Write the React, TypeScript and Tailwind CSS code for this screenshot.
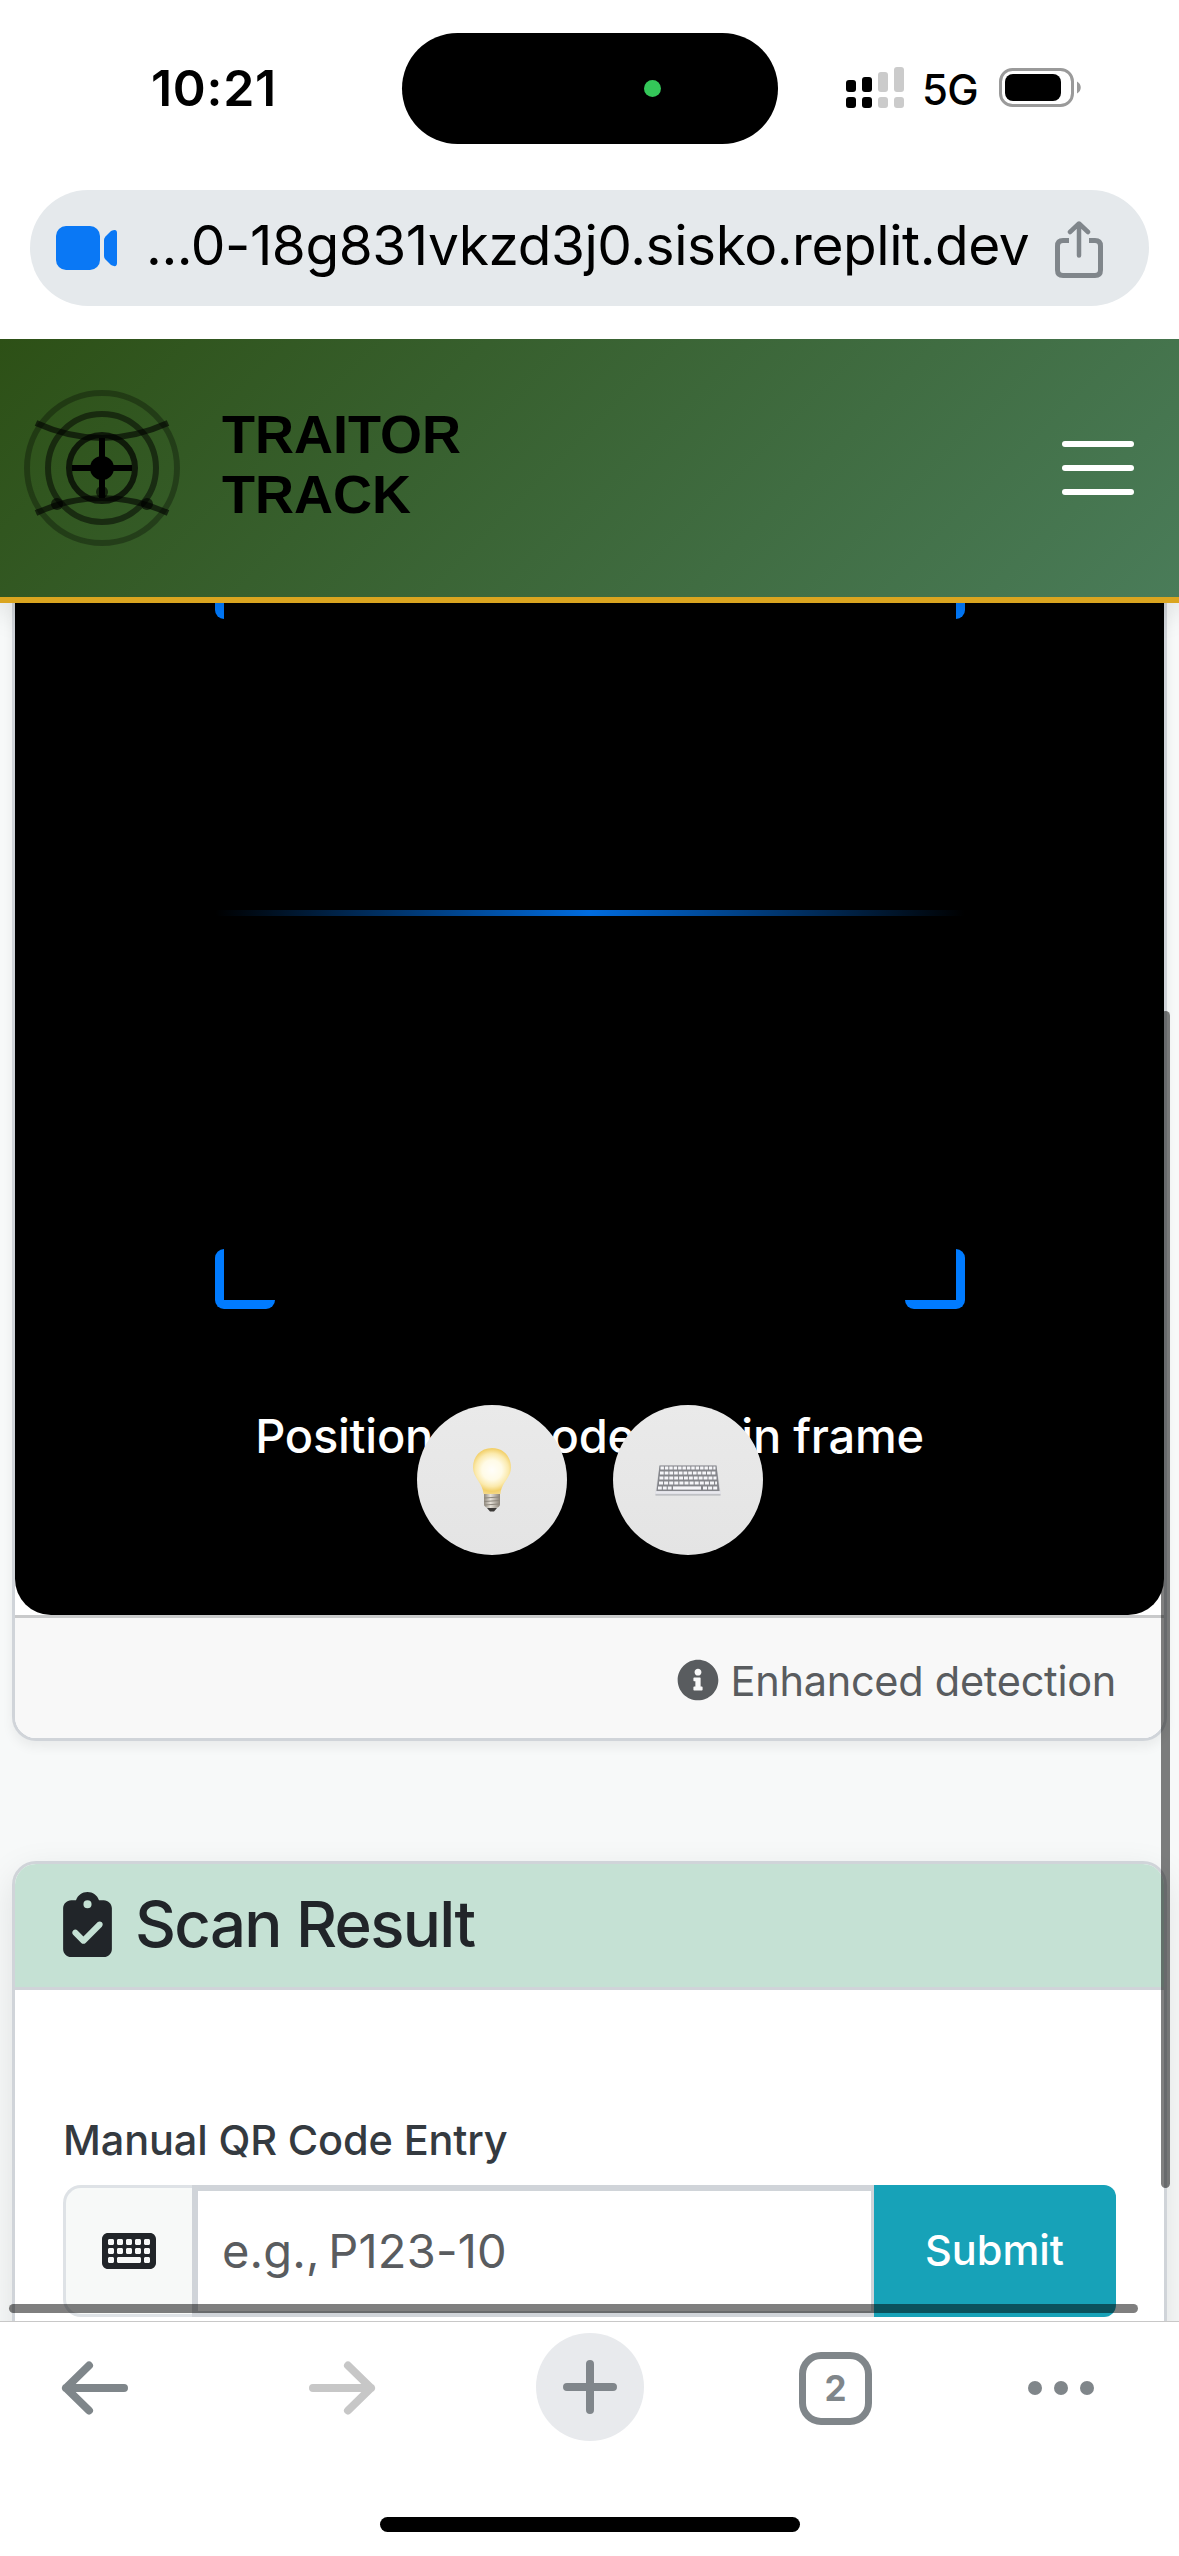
import React from 'react';
import { FaInfoCircle } from 'react-icons/fa';
import { FaClipboardCheck, FaKeyboard } from 'react-icons/fa6';

function StatusBar() {
  return (
    <div className="relative z-20 h-[180px] shrink-0 bg-white">
      <div className="absolute left-[151px] top-[58px] text-[50px] leading-[60px] font-semibold tracking-[0.7px] whitespace-nowrap">10:21</div>
      <div className="absolute left-[402px] top-[33px] w-[376px] h-[111px] rounded-full bg-black">
        <div className="absolute left-[242px] top-[47px] size-[17px] rounded-full bg-[#34c759]" />
      </div>
      <svg className="absolute left-[846px] top-[67px]" width="58" height="41" viewBox="0 0 58 41">
        <rect x="0" y="13" width="10" height="12" rx="3" />
        <rect x="16" y="10" width="10" height="15" rx="3" />
        <rect x="0" y="30" width="10" height="11" rx="3" />
        <rect x="16" y="30" width="10" height="11" rx="3" />
        <g fill="#cbcbcb">
          <rect x="32" y="5" width="10" height="20" rx="3" />
          <rect x="48" y="0" width="10" height="25" rx="3" />
          <rect x="32" y="30" width="10" height="11" rx="3" />
          <rect x="48" y="30" width="10" height="11" rx="3" />
        </g>
      </svg>
      <div className="absolute left-[922px] top-[65px] text-[42px] leading-[50px] font-medium tracking-[-0.7px]">5G</div>
      <svg className="absolute left-[999px] top-[68px]" width="84" height="39" viewBox="0 0 84 39">
        <rect x="1.5" y="1.5" width="72" height="36" rx="12" fill="none" stroke="#9a9a9a" strokeWidth="3" />
        <rect x="6" y="6" width="56" height="27" rx="8" />
        <path d="M78 13.5c5 2.500 5 9.500 0 12z" fill="#9a9a9a" />
      </svg>
    </div>
  );
}

function AddressBar() {
  return (
    <div className="relative z-20 h-[159px] shrink-0 bg-white px-[30px] pt-[10px]">
      <div className="flex h-[116px] items-center rounded-full bg-[#e5e9ec] pl-[26px] pr-[46px]">
        <svg className="shrink-0" width="61" height="44" viewBox="0 0 61 44" fill="#0a78f5">
          <rect width="44" height="44" rx="10" />
          <path d="M48 14q0-2 1.500-3.500L55 5q6-3 6 2v30q0 5-6 2l-5.500-5.500Q48 32 48 30z" />
        </svg>
        <div className="ml-[29px] mt-[-6px] w-[910px] text-[55px] leading-[66px] tracking-[-0.440px] whitespace-nowrap">...0-18g831vkzd3j0.sisko.replit.dev</div>
        <svg className="mt-[2px] shrink-0" width="48" height="57" viewBox="0 0 48 57" fill="none" stroke="#80868b" strokeWidth="5" strokeLinecap="round" strokeLinejoin="round">
          <path d="M14 19.500H8q-5.500 0-5.500 5.500v24q0 5.500 5.500 5.500h32q5.500 0 5.500-5.500V25q0-5.500-5.500-5.500h-6" strokeLinecap="butt" />
          <path d="M24 34.500V3M15 11l9-8.500 9 8.500" strokeWidth="4.500" />
        </svg>
      </div>
    </div>
  );
}

function Header() {
  return (
    <header className="relative z-10 flex h-[264px] shrink-0 items-center border-b-[6px] border-[#daa520] bg-[linear-gradient(135deg,#2d5016,#4a7c59)] pl-[12px] pr-[45px] shadow-[0_6px_30px_rgba(0,0,0,0.15)]">
      <svg width="180" height="180" viewBox="-30 -30 60 60" fill="none" stroke="#000" strokeWidth="2">
        <circle r="25" opacity=".3" />
        <circle r="18" opacity=".5" />
        <circle r="11" opacity=".7" />
        <circle r="4" fill="#000" stroke="none" />
        <path d="M-10 0H10M0-10V10" />
        <path d="M-22-15Q0-5 22-15M-22 15Q0 5 22 15" opacity=".6" />
        <g fill="#000" stroke="none" opacity=".6">
          <circle cx="-15" cy="12" r="2" />
          <circle cx="15" cy="12" r="2" />
          <circle cy="8" r="2" />
        </g>
      </svg>
      <div className="ml-[30px] mt-[-8px] font-['Liberation_Sans'] text-[54px] leading-[60px] font-bold">TRAITOR<br />TRACK</div>
      <div className="ml-auto flex flex-col gap-[18px]">
        <div className="h-[6px] w-[72px] rounded-full bg-white" />
        <div className="h-[6px] w-[72px] rounded-full bg-white" />
        <div className="h-[6px] w-[72px] rounded-full bg-white" />
      </div>
    </header>
  );
}

function Bulb() {
  return (
    <svg width="40" height="66" viewBox="0 0 40 66">
      <defs>
        <radialGradient id="glass" gradientUnits="userSpaceOnUse" cx="20" cy="23" r="25">
          <stop offset="0" stopColor="#fffefa" />
          <stop offset=".4" stopColor="#fffbe6" />
          <stop offset=".66" stopColor="#fbeaae" />
          <stop offset=".85" stopColor="#f2d06a" />
          <stop offset="1" stopColor="#f5da8c" />
        </radialGradient>
        <linearGradient id="screw">
          <stop offset="0" stopColor="#8f887c" />
          <stop offset=".4" stopColor="#e6e1d8" />
          <stop offset="1" stopColor="#8b8377" />
        </linearGradient>
      </defs>
      <path d="M20 1C8 1 1 10 1 20.500 1 31 11 36 11.500 47h17C29 36 39 31 39 20.500 39 10 32 1 20 1z" fill="url(#glass)" />
      <path d="M12 47h16v10q0 3-4 4h-8q-4-1-4-4z" fill="url(#screw)" />
      <path d="M12 51l16-1M12 54.500l16-1M12.500 58l15-1" stroke="#8d877d" strokeWidth="1.100" />
      <path d="M15 61h10l-3 3.500h-4z" fill="#3c3a38" />
    </svg>
  );
}

const keyRows = [
  { y: 3, x: 5.5, w: 55, d: '3.4 1' },
  { y: 8, x: 5, w: 56, d: '3.7 1' },
  { y: 13, x: 4.5, w: 57, d: '3.9 1' },
  { y: 18, x: 4, w: 58, d: '4 1.1' },
];

function KeyboardGlyph() {
  return (
    <svg width="66" height="31" viewBox="0 0 66 31">
      <path d="M4.500.5h57L65.500 27v3H.5v-3z" fill="#cfd0d5" />
      <path d="M4.500.5h57L64.500 26h-63z" fill="#85868b" />
      {keyRows.map((r) => (
        <path key={r.y} d={`M${r.x} ${r.y}h${r.w}`} stroke="#f6f6f9" strokeWidth="2.800" strokeDasharray={r.d} />
      ))}
      <path d="M3 23h14" stroke="#f6f6f9" strokeWidth="3.200" strokeDasharray="3.8 1.100" />
      <path d="M18 23h28" stroke="#f6f6f9" strokeWidth="3.200" />
      <path d="M48 23h15" stroke="#f6f6f9" strokeWidth="3.200" strokeDasharray="4 1.100" />
      <path d="M.5 27.500h65" stroke="#e9e9ee" strokeWidth="2.400" />
      <path d="M.5 30h65" stroke="#b0b1b6" strokeWidth="1.200" />
    </svg>
  );
}

function Scanner() {
  return (
    <div className="relative mx-[12px] flex h-[1138px] shrink-0 flex-col rounded-b-[24px] border-x-[3px] border-b-[3px] border-[#d0d4d9] bg-white shadow-[0_6px_12px_rgba(0,0,0,0.06)]">
      <div className="relative h-[1012px] rounded-b-[36px] bg-black">
        {/* Viewfinder, scrolled partly under the header */}
        <div className="absolute left-[200px] top-0 h-[706px] w-[750px]">
          <div className="absolute left-0 top-[-44px] size-[60px] rounded-[9px] border-l-[9px] border-t-[9px] border-[#007bff]" />
          <div className="absolute right-0 top-[-44px] size-[60px] rounded-[9px] border-r-[9px] border-t-[9px] border-[#007bff]" />
          <div className="absolute bottom-0 left-0 size-[60px] rounded-[9px] border-b-[9px] border-l-[9px] border-[#007bff]" />
          <div className="absolute bottom-0 right-0 size-[60px] rounded-[9px] border-b-[9px] border-r-[9px] border-[#007bff]" />
          <div className="absolute top-[307px] h-[6px] w-full bg-[linear-gradient(90deg,transparent,#007bff,transparent)] opacity-[0.87]" />
        </div>
        <div className="absolute left-0 right-0 top-[804px] text-center text-[47px] leading-[58px] font-medium tracking-[-0.250px] whitespace-nowrap text-white">Position QR code within frame</div>
        <div className="absolute left-[402px] top-[802px] flex gap-[46px]">
          <div className="flex size-[150px] items-center justify-center rounded-full bg-[linear-gradient(#eaeaea,#e4e4e4)]"><Bulb /></div>
          <div className="flex size-[150px] items-center justify-center rounded-full bg-[linear-gradient(#eaeaea,#e4e4e4)]"><KeyboardGlyph /></div>
        </div>
      </div>
      <div className="flex flex-1 items-center justify-end rounded-b-[21px] border-t-[3px] border-[#c9cacb] bg-[#f8f8f8] pr-[48px] text-[#595c5f]">
        <FaInfoCircle className="mt-[4px]" size={42} />
        <span className="ml-[12px] mt-[6px] text-[41.5px] leading-[50px] tracking-[-0.280px] whitespace-nowrap">Enhanced detection</span>
      </div>
    </div>
  );
}

function ScanResult() {
  return (
    <div className="mx-[12px] mt-[120px] h-[600px] shrink-0 rounded-[24px] border-[3px] border-[#d0d4d9] bg-white shadow-[0_12px_36px_rgba(0,0,0,0.10)]">
      <div className="flex h-[126px] items-center rounded-t-[21px] border-b-[3px] border-[#d0d4d9] bg-[#c5e1d4] pl-[48px] text-[#212529]">
        <FaClipboardCheck className="mt-[-3px] h-[65px] w-[49px]" />
        <h2 className="ml-[23px] mt-[-3px] text-[63.5px] leading-[76px] font-medium tracking-[-1.700px] whitespace-nowrap">Scan Result</h2>
      </div>
      <div className="px-[48px] pt-[125px]">
        <div className="text-[41.5px] leading-[50px] font-medium tracking-[-0.150px] text-[#343a40]">Manual QR Code Entry</div>
        <div className="mt-[20px] flex h-[132px]">
          <div className="flex w-[129px] items-center justify-center rounded-l-[18px] border-y-[3px] border-l-[3px] border-[#dee2e6] bg-[#f7f9f8] text-[#212529]">
            <FaKeyboard className="h-[48px] w-[54px]" />
          </div>
          <div className="flex w-[682px] items-center border-y-[6px] border-l-[6px] border-r-[3px] border-[#d0d4d9] bg-white pl-[24px] text-[47px] tracking-[0.200px] [word-spacing:-5px] text-[#595c5f]">e.g., P123-10</div>
          <div className="flex flex-1 items-center justify-center rounded-r-[12px] bg-[#17a2b8] pb-[2px] pr-[1px] text-[41.5px] font-medium text-white">Submit</div>
        </div>
      </div>
    </div>
  );
}

function Toolbar() {
  return (
    <nav className="relative z-10 h-[235px] shrink-0 border-t border-[#c8c8c8] bg-white">
      <div className="flex h-[132px] items-center">
        <svg className="ml-[61px]" width="67" height="54" viewBox="0 0 67 54" fill="none" stroke="#7f868a" strokeWidth="8" strokeLinecap="round" strokeLinejoin="round">
          <path d="M63 27H5M28 4.500L5 27l23 22.500" />
        </svg>
        <svg className="ml-[181px]" width="67" height="54" viewBox="0 0 67 54" fill="none" stroke="#c7c7c7" strokeWidth="8" strokeLinecap="round" strokeLinejoin="round">
          <path d="M4 27h58M39 4.500L62 27 39 49.500" />
        </svg>
        <div className="ml-[160px] mt-[-2px] flex size-[108px] items-center justify-center rounded-full bg-[#e8eaed]">
          <svg width="54" height="54" viewBox="0 0 54 54" stroke="#80868b" strokeWidth="8" strokeLinecap="round"><path d="M27 4v46M4 27h46" /></svg>
        </div>
        <div className="ml-[155px] flex size-[73px] items-center justify-center rounded-[22px] border-[7px] border-[#80868a] text-[35px] leading-none font-bold text-[#80868a]">2</div>
        <div className="ml-[156px] flex gap-[12px]">
          <div className="size-[14px] rounded-full bg-[#80868a]" />
          <div className="size-[14px] rounded-full bg-[#80868a]" />
          <div className="size-[14px] rounded-full bg-[#80868a]" />
        </div>
      </div>
      <div className="mx-auto mt-[63px] h-[15px] w-[420px] rounded-full bg-black" />
    </nav>
  );
}

export default function App() {
  return (
    <div className="flex h-[2556px] w-[1179px] flex-col overflow-hidden bg-white font-['Inter',sans-serif] text-black">
      <StatusBar />
      <AddressBar />
      <Header />
      <main className="relative flex h-[1718px] shrink-0 flex-col overflow-hidden bg-[#f7f9f9]">
        <Scanner />
        <ScanResult />
        <div className="absolute left-[1161px] top-[408px] h-[1177px] w-[9px] rounded-full bg-black/50" />
        <div className="absolute left-[9px] top-[1701px] h-[9px] w-[1129px] rounded-full bg-black/50" />
      </main>
      <Toolbar />
    </div>
  );
}
